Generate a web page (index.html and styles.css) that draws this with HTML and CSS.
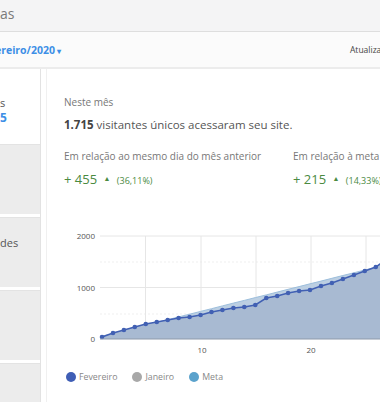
FILE: index.html
```html
<!DOCTYPE html>
<html lang="pt-BR">
<head>
    <meta charset="UTF-8">
    <link rel="stylesheet" href="styles.css">
</head>
<body>
    <div class="page">
        <div class="topbar">
            <span class="page-title">as</span>
        </div>

        <div class="subbar">
            <button class="month-picker">vereiro/2020<span class="caret">&#9662;</span></button>
            <span class="updated">Atualizado em 28/02/2020</span>
        </div>

        <div class="content">
            <!-- coluna lateral (cortada) -->
            <aside class="side">
                <div class="side-stat">
                    <span class="side-label">s</span>
                    <span class="side-value">5</span>
                </div>
                <div class="side-card"></div>
                <div class="side-card"><span class="side-card-text">des</span></div>
                <div class="side-card"></div>
                <div class="side-card"></div>
            </aside>

            <main class="panel">
                <p class="caption">Neste mês</p>
                <p class="headline"><strong>1.715</strong> visitantes únicos acessaram seu site.</p>

                <div class="compare">
                    <div class="compare-col">
                        <p class="caption">Em relação ao mesmo dia do mês anterior</p>
                        <p class="delta">+ 455 <span class="arrow">&#9650;</span> <span class="pct">(36,11%)</span></p>
                    </div>
                    <div class="compare-col">
                        <p class="caption">Em relação à meta</p>
                        <p class="delta">+ 215 <span class="arrow">&#9650;</span> <span class="pct">(14,33%)</span></p>
                    </div>
                </div>

                <svg class="chart" width="380" height="135" viewBox="0 0 380 135">
                    <g class="grid">
                        <line x1="36" y1="10" x2="380" y2="10"/>
                        <line x1="36" y1="61.5" x2="380" y2="61.5"/>
                        <line class="minor" x1="36" y1="36" x2="380" y2="36"/>
                        <line class="minor" x1="36" y1="88" x2="380" y2="88"/>
                        <line x1="81.5" y1="10" x2="81.5" y2="113"/>
                        <line x1="137" y1="10" x2="137" y2="113"/>
                        <line x1="192" y1="10" x2="192" y2="113"/>
                        <line x1="247" y1="10" x2="247" y2="113"/>
                        <line x1="302" y1="10" x2="302" y2="113"/>
                    </g>
                    <g class="y-labels">
                        <text x="31" y="13">2000</text>
                        <text x="31" y="65">1000</text>
                        <text x="31" y="116">0</text>
                    </g>
                    <g class="x-labels">
                        <text x="138" y="127">10</text>
                        <text x="247" y="127">20</text>
                    </g>
                    <path id="metaArea" class="meta-area"/>
                    <path id="metaLine" class="meta-line"/>
                    <path id="febArea" class="feb-area"/>
                    <path id="febLine" class="feb-line"/>
                    <g id="febDots" class="feb-dots"></g>
                    <line class="axis" x1="36" y1="113" x2="380" y2="113"/>
                </svg>

                <div class="legend">
                    <span class="legend-item"><i class="dot dot-feb"></i>Fevereiro</span>
                    <span class="legend-item"><i class="dot dot-jan"></i>Janeiro</span>
                    <span class="legend-item"><i class="dot dot-meta"></i>Meta</span>
                </div>
            </main>
        </div>
    </div>

    <script>
        // visitantes acumulados por dia (fevereiro)
        const febData = [39, 117, 175, 233, 291, 330, 369, 408, 427, 466, 524, 563, 602, 621, 660,
                         796, 835, 893, 932, 951, 1029, 1087, 1165, 1243, 1320, 1398, 1550, 1715];
        const metaPerDay = 1500 / 28;

        const x0 = 38, dx = 10.95, yBase = 113, scale = 51.5 / 1000;
        const px = i => x0 + i * dx;
        const py = v => yBase - v * scale;

        function linePath(values) {
            return values.map((v, i) => (i ? 'L' : 'M') + px(i).toFixed(1) + ' ' + py(v).toFixed(1)).join(' ');
        }

        function areaPath(values) {
            const last = values.length - 1;
            return linePath(values) + ` L${px(last).toFixed(1)} ${yBase} L${px(0).toFixed(1)} ${yBase} Z`;
        }

        const metaData = febData.map((_, i) => metaPerDay * (i + 1));

        document.getElementById('metaArea').setAttribute('d', areaPath(metaData));
        document.getElementById('metaLine').setAttribute('d', linePath(metaData));
        document.getElementById('febArea').setAttribute('d', areaPath(febData));
        document.getElementById('febLine').setAttribute('d', linePath(febData));

        const dots = document.getElementById('febDots');
        febData.forEach((v, i) => {
            const c = document.createElementNS('http://www.w3.org/2000/svg', 'circle');
            c.setAttribute('cx', px(i).toFixed(1));
            c.setAttribute('cy', py(v).toFixed(1));
            c.setAttribute('r', 2.3);
            dots.appendChild(c);
        });
    </script>
</body>
</html>
```

FILE: styles.css
```css
body {
    margin: 0;
    padding: 0;
    background: #ffffff;
    color: #555;
    font-family: 'Open Sans', 'Noto Sans', sans-serif;
    overflow: hidden;
}

.page {
    width: 520px;
}

p {
    margin: 0;
}

/* barra do título */
.topbar {
    height: 31px;
    background: #f4f4f5;
    border-bottom: 1px solid #dedede;
    display: flex;
    align-items: center;
}

.page-title {
    font-size: 14px;
    color: #7a7a7a;
    margin-top: -4px;
}

/* barra do mês */
.subbar {
    height: 35px;
    background: #fbfbfb;
    border-bottom: 2px solid #ececec;
    display: flex;
    align-items: center;
    justify-content: space-between;
    overflow: hidden;
}

.month-picker {
    border: none;
    background: none;
    padding: 0;
    margin-left: -11px;
    font-family: inherit;
    font-size: 10.5px;
    font-weight: 700;
    color: #3d8fe6;
    cursor: pointer;
    white-space: nowrap;
}

.month-picker .caret {
    font-size: 8px;
    margin-left: 2px;
}

.updated {
    font-size: 8.5px;
    color: #444;
    margin-left: auto;
    width: 170px;
    white-space: nowrap;
}

/* conteúdo */
.content {
    display: flex;
}

.side {
    width: 40px;
    flex-shrink: 0;
    border-right: 1px solid #e2e2e2;
    display: flex;
    flex-direction: column;
    gap: 3px;
}

.side-stat {
    height: 72px;
    display: flex;
    flex-direction: column;
    justify-content: center;
    padding-top: 10px;
    box-sizing: border-box;
}

.side-label {
    font-size: 11px;
    color: #555;
    line-height: 15px;
}

.side-value {
    font-size: 12px;
    font-weight: 700;
    color: #3d8fe6;
    line-height: 15px;
}

.side-card {
    height: 69px;
    background: #ececec;
    border-top: 1px solid #e3e3e3;
}

.side-card-text {
    display: block;
    padding-top: 17px;
    font-size: 11px;
    color: #555;
}

.panel {
    flex: 1;
    margin-left: 5px;
    border-left: 1px solid #f0f0f0;
    padding: 26px 0 0 17px;
}

.caption {
    font-size: 10px;
    color: #777;
    line-height: 14px;
    white-space: nowrap;
}

.headline {
    font-size: 11.5px;
    color: #555;
    margin-top: 7px;
    line-height: 18px;
}

.headline strong {
    color: #444;
}

.compare {
    display: flex;
    margin-top: 15px;
}

.compare-col {
    width: 229px;
    flex-shrink: 0;
}

.delta {
    margin-top: 6px;
    font-size: 13px;
    color: #4b8a3f;
    line-height: 20px;
    white-space: nowrap;
}

.delta .arrow {
    font-size: 7px;
    vertical-align: 3px;
    margin: 0 3px;
}

.delta .pct {
    font-size: 9px;
}

/* gráfico */
.chart {
    display: block;
    margin-top: 35px;
    overflow: visible;
}

.grid line {
    stroke: #e6e6e6;
    stroke-width: 1;
}

.grid line.minor {
    stroke: #efefef;
    stroke-dasharray: 2 2;
}

.y-labels text {
    font-size: 8px;
    fill: #555;
    text-anchor: end;
    font-family: 'Open Sans', sans-serif;
}

.x-labels text {
    font-size: 8px;
    fill: #555;
    text-anchor: middle;
    font-family: 'Open Sans', sans-serif;
}

.meta-area {
    fill: #bccfe2;
}

.meta-line {
    fill: none;
    stroke: #9cbedc;
    stroke-width: 1;
}

.feb-area {
    fill: #a8bad2;
}

.feb-line {
    fill: none;
    stroke: #4160b3;
    stroke-width: 1.5;
}

.feb-dots circle {
    fill: #4160b3;
}

.axis {
    stroke: #8e9aab;
    stroke-width: 1;
}

.legend {
    display: flex;
    gap: 15px;
    margin-top: 10px;
    padding-left: 2px;
}

.legend-item {
    display: flex;
    align-items: center;
    gap: 3px;
    font-size: 8.8px;
    color: #888;
}

.dot {
    width: 10px;
    height: 10px;
    border-radius: 50%;
    display: inline-block;
}

.dot-feb {
    background: #3f5eb5;
}

.dot-jan {
    background: #a8a8a8;
}

.dot-meta {
    background: #5ba2cc;
}
```
